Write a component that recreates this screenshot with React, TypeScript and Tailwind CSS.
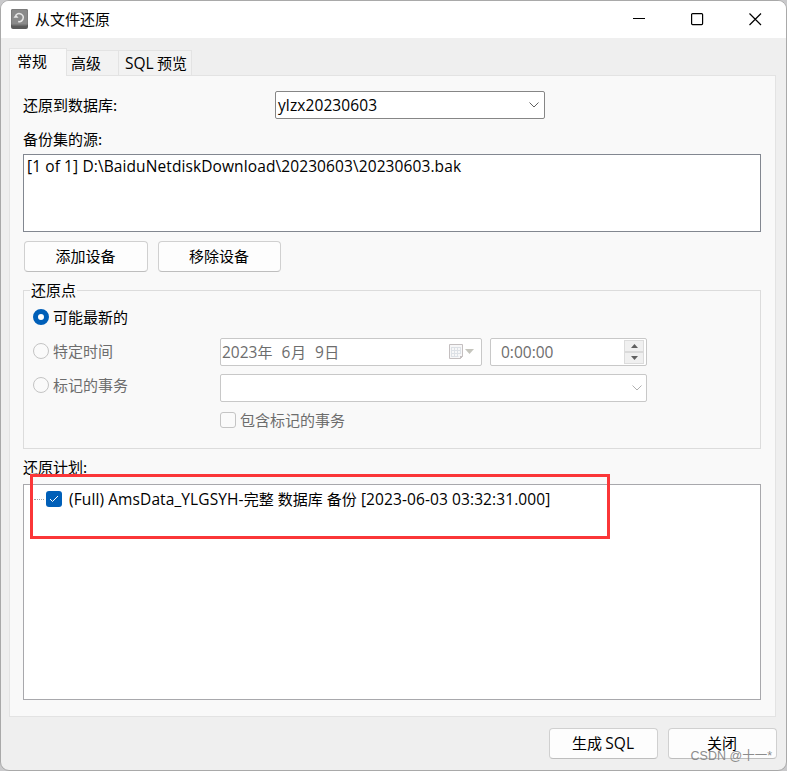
import type { ReactNode } from "react";

const tabs = [
  { id: "general", label: <>常规</>, className: "h-[28px] w-[58px] border-l bg-[#f9f9f9] pl-[7px] pb-[3px]" },
  { id: "advanced", label: <>高级</>, className: "h-[25px] w-[52px] bg-[#f2f2f2] pl-[4px]" },
  { id: "sql", label: <><En>SQL</En> 预览</>, className: "h-[25px] w-[73px] bg-[#f2f2f2] pl-[6px]" },
];

// Latin runs use a humanist face, a touch larger than the CJK text around them
function En({ children, className = "" }: { children: ReactNode; className?: string }) {
  return (
    <span className={`font-['Open_Sans','Noto_Sans',sans-serif] text-[15.5px] leading-[18px] whitespace-pre ${className}`}>
      {children}
    </span>
  );
}

function Button({ children, className = "" }: { children: ReactNode; className?: string }) {
  return (
    <button
      className={`flex h-[31px] items-center justify-center rounded-[4px] border border-[#d0d0d0] border-b-[#bebebe] bg-[#fdfdfd] pr-px pb-[2px] ${className}`}
    >
      {children}
    </button>
  );
}

function Chevron({ className = "" }: { className?: string }) {
  return (
    <svg width="10" height="6" viewBox="0 0 10 6" fill="none" stroke="currentColor" className={className}>
      <path d="M.5.5 5 5 9.5.5" />
    </svg>
  );
}

function Radio({ label, checked = false }: { label: string; checked?: boolean }) {
  return (
    <label className={`flex h-[34px] items-center gap-[4px] ${checked ? "text-black" : "text-[#6d6d6d]"}`}>
      <span
        className={`size-4 rounded-full ${checked ? "border-[5px] border-[#005fb8] bg-white" : "border border-[#c4c4c4] bg-[#fafafa]"}`}
      />
      {label}
    </label>
  );
}

function TitleBar() {
  return (
    <header className="flex h-[37px] shrink-0 items-center bg-white pl-[10px]">
      <svg width="17" height="20" viewBox="0 0 17 20" aria-hidden="true" className="-mt-px">
        <rect width="17" height="20" rx="2" fill="#5a5a5a" />
        <rect width="17" height="16.5" rx="2" fill="#7c7c7c" />
        <rect x="1" y="1" width="15" height="14" rx="1" fill="#8a8a8a" />
        <path d="M5 6.200a4 4 0 1 1 2.200 6.300" fill="none" stroke="#e6e6e6" strokeWidth="1.5" />
        <path d="M2.500 8.800h5L4.800 5.400z" fill="#e6e6e6" />
      </svg>
      <h1 className="ml-[7px] flex-1 pb-[2px]">从文件还原</h1>
      <div className="mr-[24px] flex items-center gap-[45px]">
        <svg width="13" height="13" viewBox="0 0 13 13" fill="none" stroke="#000">
          <path d="M0 5.500h12" />
        </svg>
        <svg width="13" height="13" viewBox="0 0 13 13" fill="none" stroke="#000" strokeWidth="1.2">
          <rect x=".6" y=".6" width="11" height="11" rx="1" />
        </svg>
        <svg width="13" height="13" viewBox="0 0 13 13" fill="none" stroke="#000" strokeWidth="1.2">
          <path d="M.5.5 12 12M12 .5.5 12" />
        </svg>
      </div>
    </header>
  );
}

function RestorePoint() {
  return (
    <fieldset className="relative mt-[18px] h-[159px] border border-[#dcdcdc]">
      <span className="absolute -top-[11px] left-[6px] bg-[#f9f9f9] px-px leading-[20px]">还原点</span>
      <div className="flex pt-[9px] pl-[9px]">
        <div className="w-[187px]">
          <Radio label="可能最新的" checked />
          <Radio label="特定时间" />
          <Radio label="标记的事务" />
        </div>
        <div className="flex w-[427px] flex-col pt-[38px] text-[#6d6d6d]">
          <div className="flex gap-[8px]">
            <div className="flex h-[28px] w-[262px] items-center rounded-[2px] border border-[#c8c8c8] bg-white pr-[6px] pl-px">
              <span className="flex-1 whitespace-pre">
                <En>2023</En>年<En className="tracking-[0.5px]">{"  6"}</En>月<En className="tracking-[0.5px]">{"  9"}</En>日
              </span>
              <svg width="26" height="16" viewBox="0 0 26 16" fill="none">
                <path d="M.5.5h13v12l-2 2H.5z" fill="#f7f7f8" stroke="#c4bfc0" />
                <path d="M2.500 3.500h9M2.500 6.500h9M2.500 9.500h9M2.500 12.500h7M2.500 3v10M5.500 3v10M8.500 3v10M11.500 3v7" stroke="#dde1e6" />
                <path d="M11 15v-3h3z" fill="#c4bfc0" />
                <path d="M16 5h9l-4.500 5z" fill="#c5c5bd" />
              </svg>
            </div>
            <div className="flex h-[28px] w-[157px] items-center rounded-[2px] border border-[#c8c8c8] bg-white pr-[2px] pl-[10px]">
              <En className="flex-1">0:00:00</En>
              <div className="flex h-[24px] w-[20px] flex-col border border-[#dcdcdc] bg-[#f0f0f0] text-[#606060]">
                <span className="flex flex-1 items-center justify-center border-b-2 border-[#dadada]">
                  <svg width="7" height="4"><path d="M0 4h7L3.500 0z" fill="currentColor" /></svg>
                </span>
                <span className="flex flex-1 items-center justify-center">
                  <svg width="7" height="4"><path d="M0 0h7L3.500 4z" fill="currentColor" /></svg>
                </span>
              </div>
            </div>
          </div>
          <div className="mt-[8px] flex h-[28px] items-center justify-end rounded-[2px] border border-[#c8c8c8] bg-white pr-[4px]">
            <Chevron className="text-[#b0b0b0]" />
          </div>
          <label className="mt-[8px] flex h-[20px] items-center gap-[4px]">
            <span className="size-4 rounded-[3px] border border-[#c4c4c4] bg-[#fafafa]" />
            包含标记的事务
          </label>
        </div>
      </div>
    </fieldset>
  );
}

function RestorePlan() {
  return (
    <div className="relative h-[216px] border border-[#a8a8ac] bg-white">
      <div className="flex h-[28px] items-center pl-[10px]">
        <span className="w-[10px] border-t border-dotted border-[#a0a0a0]" />
        <span className="ml-[2px] flex size-4 items-center justify-center rounded-[3px] bg-[#005fb8]">
          <svg width="10" height="8" viewBox="0 0 10 8" fill="none" stroke="#fff">
            <path d="m1 4 2.500 2.500L9 1" />
          </svg>
        </span>
        <span className="ml-[7px] whitespace-pre">
          <En className="tracking-[0.1px]">(Full) AmsData_YLGSYH-</En>完整<En> </En>数据库<En> </En>备份<En className="tracking-[0.1px]">{" [2023-06-03 03:32:31.000]"}</En>
        </span>
      </div>
      {/* highlight drawn over the selected backup */}
      <div className="absolute -top-[11px] left-[6px] h-[65px] w-[580px] border-[3px] border-[#fb3638]" />
    </div>
  );
}

export default function App() {
  return (
    <div className="h-[771px] w-[787px] overflow-hidden bg-[#c9c9cb] font-['Noto_Sans_CJK_SC',sans-serif] text-[15px] leading-[20px] text-black">
      <div className="relative flex h-full flex-col overflow-hidden rounded-[9px] border border-[#a9a9a9] bg-[#efefef]">
        <TitleBar />
        <main className="flex flex-1 flex-col pt-[10px] pr-[10px] pl-[8px]">
          <nav className="flex h-[27px] items-end">
            {tabs.map((tab) => (
              <div
                key={tab.id}
                className={`flex shrink-0 items-center border-t border-r border-[#e3e3e3] ${tab.className} ${tab.id === "general" ? "relative z-10 self-start" : ""}`}
              >
                <span>{tab.label}</span>
              </div>
            ))}
          </nav>
          <section className="flex h-[642px] flex-col border border-[#e3e3e3] bg-[#f9f9f9] pt-[15px] pr-[14px] pl-[13px]">
            <div className="flex h-[28px] items-center">
              <span className="w-[252px]">还原到数据库:</span>
              <div className="flex h-[28px] w-[270px] items-center rounded-[2px] border border-[#868686] bg-white pr-[5px] pl-[2px]">
                <En className="flex-1 pb-px tracking-[0.1px]">ylzx20230603</En>
                <Chevron className="text-[#606060]" />
              </div>
            </div>
            <div className="mt-[10px] h-[25px]">备份集的源:</div>
            <div className="h-[78px] border border-[#828790] bg-white pt-[2px] pl-[3px]">
              <En className="block tracking-[0.1px]">{"[1 of 1] D:\\BaiduNetdiskDownload\\20230603\\20230603.bak"}</En>
            </div>
            <div className="mt-[9px] flex gap-[10px] pl-px">
              <Button className="w-[124px]">添加设备</Button>
              <Button className="w-[123px]">移除设备</Button>
            </div>
            <RestorePoint />
            <div className="mt-[8px] h-[27px]">还原计划:</div>
            <RestorePlan />
          </section>
          <footer className="mt-[11px] -mr-px flex justify-end gap-[10px]">
            <Button className="w-[109px]"><span>生成 <En>SQL</En></span></Button>
            <Button className="w-[109px]">关闭</Button>
          </footer>
        </main>
        <span className="absolute right-[14px] bottom-[4px] font-['Liberation_Sans','Noto_Sans_CJK_SC',sans-serif] text-[12.5px] whitespace-nowrap text-[#8c8c8c]">
          CSDN @十一*
        </span>
      </div>
    </div>
  );
}
